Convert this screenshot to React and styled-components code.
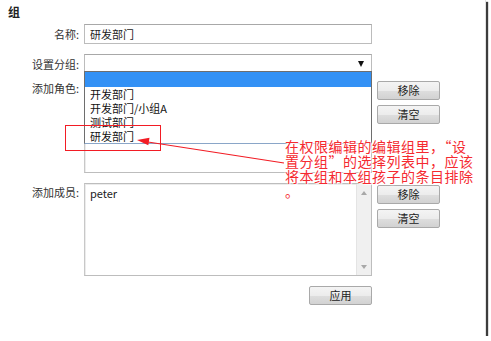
import React from "react"
import styled, { createGlobalStyle } from "styled-components"

const groupOptions = ["", "开发部门", "开发部门/小组A", "测试部门", "研发部门"]
const noteLines = ["在权限编辑的编辑组里，“设", "置分组”的选择列表中，应该", "将本组和本组孩子的条目排除", "。"]

const App = () => {
  return (
    <>
      <GlobalStyle />
      <Frame>
        <Title>组</Title>

        <Row $mt={5}>
          <Label>名称:</Label>
          <TextInput>研发部门</TextInput>
        </Row>

        <Row $mt={10}>
          <Label>设置分组:</Label>
          <Select>
            <Caret />
            <Dropdown>
              {groupOptions.map((opt, i) => (
                <Option key={i} $selected={i === 0}>
                  {opt}
                </Option>
              ))}
            </Dropdown>
          </Select>
        </Row>

        <Row $mt={5}>
          <Label $list>添加角色:</Label>
          <ListBox $height={94} />
          <ButtonStack>
            <Button>移除</Button>
            <Button>清空</Button>
          </ButtonStack>
        </Row>

        <Row $mt={10}>
          <Label $list>添加成员:</Label>
          <ListBox $height={93}>
            <ListContent>peter</ListContent>
            <Scrollbar>
              <ScrollArrow $up />
              <ScrollArrow />
            </Scrollbar>
          </ListBox>
          <ButtonStack>
            <Button>移除</Button>
            <Button>清空</Button>
          </ButtonStack>
        </Row>

        <Row $mt={10}>
          <span />
          <ApplyButton>应用</ApplyButton>
        </Row>

        <Markup width="486" height="336" viewBox="0 0 486 336">
          <rect x="65.5" y="125.5" width="95" height="25" fill="none" stroke="#f21c24" strokeWidth="1" />
          <line x1="284" y1="163" x2="148" y2="142" stroke="#f21c24" strokeWidth="1.2" />
          <polygon points="137,140 149.5,137.8 148.3,145.2" fill="#f21c24" />
        </Markup>

        <Note>
          {noteLines.map((line, i) => (
            <NoteLine key={i}>{line}</NoteLine>
          ))}
        </Note>
      </Frame>
    </>
  )
}

export default App

const GlobalStyle = createGlobalStyle`
  body {
    margin: 0;
    background: #fff;
    font-family: "Noto Sans CJK SC", "Noto Sans", sans-serif;
  }
`

const Frame = styled.div`
  position: relative;
  width: 486px;
  height: 336px;
  box-sizing: border-box;
  padding: 5px 0 0 8px;
  background: #fff;
  border-right: 1px solid #e2e2e2;
  box-shadow: 2px 2px 1px #3c3c3c;
`

const Title = styled.div`
  font-size: 12px;
  font-weight: bold;
  line-height: 14px;
  color: #222;
`

const Row = styled.div`
  display: grid;
  grid-template-columns: 71px 288px 63px;
  column-gap: 5px;
  align-items: start;
  margin-top: ${(p) => p.$mt}px;
`

const Label = styled.div`
  font-size: 11px;
  line-height: ${(p) => (p.$list ? "14px" : "20px")};
  padding-top: ${(p) => (p.$list ? "2px" : "0")};
  text-align: right;
  color: #333;
  white-space: nowrap;
`

const TextInput = styled.div`
  box-sizing: border-box;
  height: 20px;
  padding: 0 5px;
  border: 1px solid #bcbcbc;
  border-top-color: #a8a8a8;
  font-size: 11px;
  line-height: 18px;
  color: #222;
`

const Select = styled.div`
  position: relative;
  box-sizing: border-box;
  height: 20px;
  border: 1px solid #bcbcbc;
  border-top-color: #a8a8a8;
  display: flex;
  justify-content: flex-end;
  align-items: flex-start;
  padding: 6px 7px 0 0;
  z-index: 2;
`

const Caret = styled.span`
  width: 0;
  height: 0;
  border-left: 3.5px solid transparent;
  border-right: 3.5px solid transparent;
  border-top: 6px solid #111;
`

const Dropdown = styled.div`
  position: absolute;
  top: 16px;
  left: -1px;
  width: 288px;
  box-sizing: border-box;
  background: #fff;
  border: 1px solid #6e6e6e;
  border-bottom-color: #8aa6c8;
  display: flex;
  flex-direction: column;
`

const Option = styled.div`
  height: ${(p) => (p.$selected ? "15px" : "14px")};
  padding-left: 5px;
  font-size: 11px;
  line-height: 14px;
  color: ${(p) => (p.$selected ? "#fff" : "#111")};
  background: ${(p) => (p.$selected ? "#3391f5" : "#fff")};
  white-space: nowrap;
`

const ListBox = styled.div`
  box-sizing: border-box;
  height: ${(p) => p.$height}px;
  border: 1px solid #bdbdbd;
  border-left-color: #c8c8c8;
  box-shadow: inset 1px 1px 0 #ececec;
  display: flex;
  background: #fff;
`

const ListContent = styled.div`
  flex: 1;
  padding: 2px 5px;
  font-size: 11px;
  line-height: 14px;
  color: #222;
`

const Scrollbar = styled.div`
  width: 14px;
  background: #f0f0f0;
  border-left: 1px solid #e4e4e4;
  display: flex;
  flex-direction: column;
  justify-content: space-between;
  align-items: center;
  padding: 7px 0 6px;
`

const ScrollArrow = styled.span`
  width: 0;
  height: 0;
  border-left: 3.5px solid transparent;
  border-right: 3.5px solid transparent;
  ${(p) => (p.$up ? "border-bottom: 4px solid #a8a8a8;" : "border-top: 4px solid #a8a8a8;")}
`

const ButtonStack = styled.div`
  display: flex;
  flex-direction: column;
  gap: 5px;
  padding-top: 2px;
`

const Button = styled.button`
  box-sizing: border-box;
  width: 63px;
  height: 19px;
  padding: 0;
  border: 1px solid #a9a9a9;
  border-radius: 2px;
  background: linear-gradient(#f4f4f4, #ececec 50%, #dedede 51%, #d2d2d2);
  font-family: inherit;
  font-size: 11px;
  line-height: 17px;
  color: #222;
`

const ApplyButton = styled(Button)`
  justify-self: end;
`

const Markup = styled.svg`
  position: absolute;
  top: 0;
  left: 0;
  pointer-events: none;
  z-index: 3;
`

const Note = styled.div`
  position: absolute;
  left: 285px;
  top: 139px;
  z-index: 4;
  display: flex;
  flex-direction: column;
  align-items: flex-start;
  font-size: 14px;
  letter-spacing: 0.5px;
  line-height: 15px;
  color: #f52a30;
  text-shadow: 0 0 2px #fff, 0 0 2px #fff, 1px 1px 1px #fff, -1px -1px 1px #fff;
`

const NoteLine = styled.div`
  white-space: nowrap;
`
